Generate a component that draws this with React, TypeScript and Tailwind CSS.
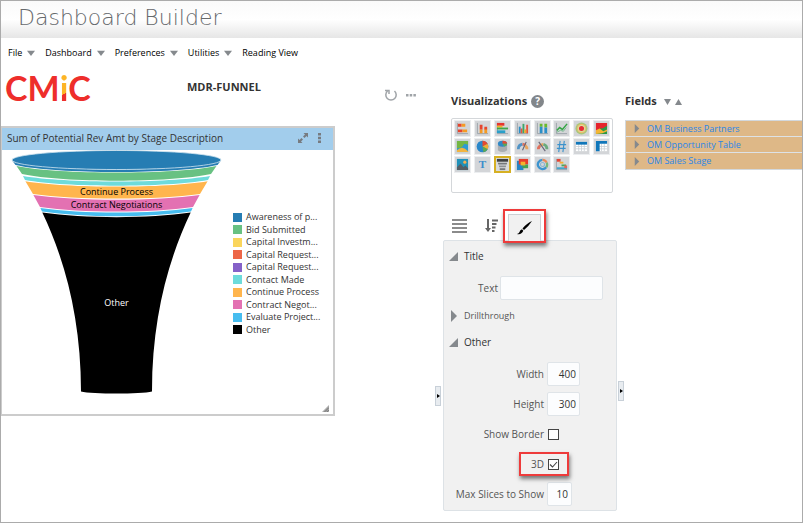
import { useState } from "react";
import type { ReactNode } from "react";

const menus = [
  { label: "File", hasMenu: true },
  { label: "Dashboard", hasMenu: true },
  { label: "Preferences", hasMenu: true },
  { label: "Utilities", hasMenu: true },
  { label: "Reading View", hasMenu: false },
];

const legend = [
  { label: "Awareness of p...", swatch: "bg-[#267db3]" },
  { label: "Bid Submitted", swatch: "bg-[#68c182]" },
  { label: "Capital Investm...", swatch: "bg-[#fad55c]" },
  { label: "Capital Request...", swatch: "bg-[#ed6647]" },
  { label: "Capital Request...", swatch: "bg-[#8561c8]" },
  { label: "Contact Made", swatch: "bg-[#6ddbdb]" },
  { label: "Continue Process", swatch: "bg-[#ffb54d]" },
  { label: "Contract Negot...", swatch: "bg-[#e371b2]" },
  { label: "Evaluate Project...", swatch: "bg-[#47bdef]" },
  { label: "Other", swatch: "bg-black" },
];

const fields = ["OM Business Partners", "OM Opportunity Table", "OM Sales Stage"];

// Each slice: left edge x/y and centre depth of its upper and lower rim
const slices = [
  { fill: "#267db3", top: [11.5, 12, 20.5], bottom: [14.5, 16, 23] },
  { fill: "#68c182", top: [15.5, 17, 23.6], bottom: [21, 25, 31.7] },
  { fill: "#6ddbdb", top: [22, 27, 32.5], bottom: [24, 31, 36.7] },
  { fill: "#ffb54d", top: [24.4, 32.2, 37.6], bottom: [32, 45, 49.6] },
  { fill: "#e371b2", top: [32.4, 46, 50.7], bottom: [39, 58, 62.6] },
  { fill: "#47bdef", top: [39.4, 59, 63.6], bottom: [41, 62.6, 67.3] },
];

const CENTER = 115.5;

function slicePath(top: number[], bottom: number[]) {
  const [tx, ty, tc] = top;
  const [bx, by, bc] = bottom;
  const tr = CENTER * 2 - tx;
  const br = CENTER * 2 - bx;
  const td = ty + (tc - ty) / 0.75;
  const bd = by + (bc - by) / 0.75;
  return `M${tx} ${ty}C${tx + 42} ${td} ${tr - 42} ${td} ${tr} ${ty}L${br} ${by}C${br - 42} ${bd} ${bx + 42} ${bd} ${bx} ${by}Z`;
}

function FunnelChart() {
  return (
    <svg width="228" height="252" viewBox="1 1 228 252" className="shrink-0" role="img" aria-label="Funnel chart">
      {slices.map((s) => (
        <path key={s.fill} d={slicePath(s.top, s.bottom)} fill={s.fill} />
      ))}
      <ellipse cx={CENTER} cy="11" rx="104.5" ry="9.5" fill="#267db3" stroke="#cfe3ef" strokeWidth="0.8" />
      <path
        d="M41.3 63.6C84 69.7 147 69.7 189.7 63.6C167 111 151 170 151 242.5C140 245.3 91 245.3 80 242.5C80 170 64 111 41.3 63.6Z"
        fill="#000"
      />
      <g textAnchor="middle" className="text-[9px]">
        <text x={CENTER} y="46">Continue Process</text>
        <text x={CENTER} y="59">Contract Negotiations</text>
        <text x={CENTER} y="157" fill="#fff">Other</text>
      </g>
    </svg>
  );
}

function Caret({ dir = "down", className = "" }: { dir?: "down" | "up" | "right" | "corner"; className?: string }) {
  const shapes = {
    down: "M0 1H8L4 8Z",
    up: "M0 8H8L4 1Z",
    right: "M1 0L7 4L1 8Z",
    corner: "M8 0V8H0Z",
  };
  return (
    <svg viewBox="0 0 8 8" preserveAspectRatio="none" fill="#85898d" className={`shrink-0 ${className}`} aria-hidden="true">
      <path d={shapes[dir]} />
    </svg>
  );
}

const axis = <path d="M2.5 2V13.5H14" fill="none" stroke="#9aa3aa" />;

const visualizations: { name: string; icon: ReactNode }[] = [
  {
    name: "Horizontal stacked bar",
    icon: (
      <>
        {axis}
        <path d="M3 3h4v3H3zM3 9h5v3H3z" fill="#e6452e" />
        <path d="M7 3h4v3H7zM8 9h5v3H8z" fill="#f59a23" />
      </>
    ),
  },
  {
    name: "Stacked bar",
    icon: (
      <>
        {axis}
        <path d="M5 9h3v4H5zM10 8h3v5h-3z" fill="#f59a23" />
        <path d="M5 4h3v5H5zM10 6h3v3h-3z" fill="#e6452e" />
      </>
    ),
  },
  {
    name: "Horizontal bar",
    icon: (
      <>
        {axis}
        <path d="M2 2h8v3H2z" fill="#e6352e" />
        <path d="M2 5h6v2H2z" fill="#f5b323" />
        <path d="M2 7h12v2H2z" fill="#3fa648" />
        <path d="M2 10h9v3H2z" fill="#2a9fc9" />
      </>
    ),
  },
  {
    name: "Bar",
    icon: (
      <>
        {axis}
        <path d="M4 6h2v7H4z" fill="#2a8fc9" />
        <path d="M6 8h2v5H6zM12 4h2v9h-2z" fill="#e6553e" />
        <path d="M8 3h2v10H8z" fill="#3fa668" />
        <path d="M10 9h2v4h-2z" fill="#f5a623" />
      </>
    ),
  },
  {
    name: "Combination",
    icon: (
      <>
        {axis}
        <path d="M5 3h3v3H5zM10 3h3v4h-3z" fill="#68b92f" />
        <path d="M5 6h3v7H5zM10 7h3v6h-3z" fill="#2a8fc9" />
      </>
    ),
  },
  {
    name: "Line",
    icon: (
      <>
        {axis}
        <path d="M3 10L6 7L9 9L14 3" fill="none" stroke="#36a546" strokeWidth="1.6" />
        <path d="M3 12L7 10L10 11L13 7" fill="none" stroke="#71b98c" />
      </>
    ),
  },
  {
    name: "Sunburst",
    icon: (
      <>
        <circle cx="8" cy="8" r="6.5" fill="#a9c77c" />
        <circle cx="8" cy="8" r="4.8" fill="#f4bd69" />
        <circle cx="8" cy="8" r="3.8" fill="#d9dfa2" />
        <circle cx="8" cy="8" r="2.7" fill="#e52b36" />
      </>
    ),
  },
  {
    name: "Area",
    icon: (
      <>
        <path d="M2 2H14V7L8 10L2 13Z" fill="#e5232c" />
        <path d="M14 5V14H2V12Q6 7 9 8Z" fill="#299846" />
        <path d="M2 10L6 8L10 11L14 9V11L9 13L2 14Z" fill="#f4b634" />
      </>
    ),
  },
  {
    name: "Map area",
    icon: (
      <>
        <path d="M2 2H14V14H2Z" fill="#2d9bd1" />
        <path d="M2 2H14V6L10 5L7 9L2 10Z" fill="#74b643" />
        <path d="M2 14V12Q8 6 14 13V14Z" fill="#f2b440" />
      </>
    ),
  },
  {
    name: "Pie",
    icon: (
      <>
        <circle cx="8" cy="8" r="6.3" fill="#2987ca" />
        <path d="M8 8V1.7A6.3 6.3 0 0 1 13.5 5Z" fill="#e54a30" />
        <path d="M8 8L13.5 5A6.3 6.3 0 0 1 13.5 11Z" fill="#f3ad32" />
        <path d="M8 8L13.5 11A6.3 6.3 0 0 1 9 14.2Z" fill="#5ca952" />
      </>
    ),
  },
  {
    name: "3D pie",
    icon: (
      <>
        <path d="M3 6H13V12Q8 16 3 12Z" fill="#a9adb1" />
        <ellipse cx="8" cy="5" rx="5" ry="3.3" fill="#3088c6" />
        <path d="M8 5V1.7A5 3.3 0 0 1 13 5Z" fill="#e54a30" />
        <path d="M8 5H13A5 3.3 0 0 1 10 8Z" fill="#5ca952" />
      </>
    ),
  },
  {
    name: "Dial gauge",
    icon: (
      <>
        <path d="M3.5 11A5.5 5.5 0 0 1 8 5.5" fill="none" stroke="#4f93c6" strokeWidth="3" />
        <path d="M8 5.500A5.500 5.500 0 0 1 11 7" fill="none" stroke="#e0705c" strokeWidth="3" />
        <path d="M11 7A5.500 5.500 0 0 1 12.800 11" fill="none" stroke="#e9a55c" strokeWidth="3" />
        <path d="M8 12L12 3" stroke="#667" strokeWidth="1.2" />
      </>
    ),
  },
  {
    name: "Status gauge",
    icon: (
      <>
        <path d="M3.500 11A5.500 5.500 0 0 1 5.500 7" fill="none" stroke="#e0705c" strokeWidth="3" />
        <path d="M5.500 7A5.500 5.500 0 0 1 9 5.600" fill="none" stroke="#e9a55c" strokeWidth="3" />
        <path d="M9 5.600A5.500 5.500 0 0 1 12.800 11" fill="none" stroke="#6aab7d" strokeWidth="3" />
        <path d="M11 13L4 3" stroke="#667" strokeWidth="1.2" />
      </>
    ),
  },
  {
    name: "Number",
    icon: <path d="M6.5 2L5 14M11 2L9.5 14M3.5 6H13M3 10H12.5" stroke="#3c92cc" strokeWidth="1.2" />,
  },
  {
    name: "Table",
    icon: (
      <>
        <path d="M2 3H14V13H2Z" fill="#fff" />
        <path d="M2 8H14M2 10.5H14M5 5V13M8 5V13M11 5V13" stroke="#c4ccd2" strokeWidth="0.8" />
        <path d="M2 3H14V6H2Z" fill="#0f76ba" />
      </>
    ),
  },
  {
    name: "Pivot table",
    icon: (
      <>
        <path d="M2 2H14V13H2Z" fill="#fff" />
        <path d="M5 8H14M5 10.5H14M8 5V13M11 5V13" stroke="#c4ccd2" strokeWidth="0.8" />
        <path d="M2 2H14V5H6V13H2Z" fill="#0f76ba" />
      </>
    ),
  },
  {
    name: "Image",
    icon: (
      <>
        <path d="M2 2H14V14H2Z" fill="#1f91b9" />
        <circle cx="10.5" cy="5.5" r="1.7" fill="#f3ae52" />
        <path d="M2 14V11L6 7L9 11L11 9L14 12V14Z" fill="#555f66" />
      </>
    ),
  },
  {
    name: "Text",
    icon: (
      <text x="8" y="12" textAnchor="middle" fontSize="12" fill="#3c8dcb" className="font-['Liberation_Serif',serif] font-bold">
        T
      </text>
    ),
  },
  {
    name: "Funnel",
    icon: (
      <>
        <path d="M2 2H14V5H2Z" fill="#3f4142" />
        <path d="M3 6H13L12.5 8H3.5Z" fill="#74787a" />
        <path d="M4 9H12L11.5 11H4.5Z" fill="#8d9193" />
        <path d="M5 12H11V14H5Z" fill="#74787a" />
      </>
    ),
  },
  {
    name: "Treemap",
    icon: (
      <>
        <path d="M2 4H9V14H2Z" fill="#2583c4" />
        <path d="M4 2H14V8H4Z" fill="#e63c2d" />
        <path d="M8 8H14V12H8Z" fill="#43a252" />
        <path d="M6 5H11V9H6Z" fill="#f4b12d" />
      </>
    ),
  },
  {
    name: "Ring",
    icon: (
      <g fill="none" strokeWidth="2.5">
        <path d="M8 3A5 5 0 1 0 12 11" stroke="#3c94cf" />
        <path d="M8 3A5 5 0 0 1 12.5 6" stroke="#e98b5a" />
        <path d="M12.5 6A5 5 0 0 1 12 11" stroke="#76b77b" />
        <circle cx="8" cy="8" r="2.2" stroke="#8ab6d3" strokeWidth="1.2" />
      </g>
    ),
  },
  {
    name: "Gantt",
    icon: (
      <>
        {axis}
        <path d="M3 2H7V5H3Z" fill="#e54535" />
        <path d="M6 5H10V7H6Z" fill="#f3ae32" />
        <path d="M8 8H13V10H8Z" fill="#49a659" />
        <path d="M3 11H14V13H3Z" fill="#41a5cb" />
        <path d="M11 9H14V12H11Z" fill="#e5655a" />
      </>
    ),
  },
];

function SettingRow({ label, htmlFor, children }: { label: string; htmlFor: string; children: ReactNode }) {
  return (
    <div className="grid h-[30px] grid-cols-[100px_1fr] items-center gap-[3px]">
      <label htmlFor={htmlFor} className="whitespace-nowrap text-right">
        {label}
      </label>
      <div className="flex items-center">{children}</div>
    </div>
  );
}

function CheckBox({ id, checked, onChange }: { id: string; checked: boolean; onChange: (v: boolean) => void }) {
  return (
    <span className="ml-px grid h-[11px] w-[11px]">
      <input
        id={id}
        type="checkbox"
        checked={checked}
        onChange={(e) => onChange(e.target.checked)}
        className="col-start-1 row-start-1 h-[11px] w-[11px] appearance-none border border-[#444] bg-white"
      />
      {checked && (
        <svg viewBox="0 0 11 11" className="pointer-events-none col-start-1 row-start-1 h-[11px] w-[11px]" aria-hidden="true">
          <path d="M2 5.5L4.5 8L9 3" fill="none" stroke="#444" strokeWidth="1.1" />
        </svg>
      )}
    </span>
  );
}

function SectionToggle({ label, open }: { label: string; open: boolean }) {
  return (
    <button
      type="button"
      aria-expanded={open}
      className={`flex items-center ${open ? "gap-[6px] text-[#333]" : "gap-[6px] text-[9px]"}`}
    >
      {open ? <Caret dir="corner" className="h-[9px] w-[9px]" /> : <Caret dir="right" className="ml-px h-3 w-[8px]" />}
      {label}
    </button>
  );
}

function Splitter({ className }: { className: string }) {
  return (
    <button
      type="button"
      aria-label="Collapse pane"
      className={`flex h-5 w-[6px] shrink-0 items-center justify-center border border-[#c8d0d8] bg-[#e8ecf0] ${className}`}
    >
      <svg width="3" height="4" viewBox="0 0 3 4" aria-hidden="true">
        <path d="M0 0L3 2L0 4Z" fill="#000" />
      </svg>
    </button>
  );
}

function ChartPanel() {
  return (
    <section className="flex h-[290px] w-[334px] max-w-full flex-col border-2 border-l border-[#ccc] bg-white">
      <header className="flex h-[22px] items-center bg-[#a2cdec] pb-[3px] pl-[5px] pr-3 text-[#333]">
        <h2 className="flex-1 whitespace-nowrap">Sum of Potential Rev Amt by Stage Description</h2>
        <button type="button" aria-label="Maximize">
          <svg width="10" height="10" viewBox="0 0 10 10" fill="#777b80" aria-hidden="true">
            <path d="M5.5 0H10V4.5L8.500 3L6.500 5L5 3.500L7 1.500ZM0 5.500L1.500 7L3.500 5L5 6.500L3 8.500L4.500 10H0Z" />
          </svg>
        </button>
        <button type="button" aria-label="Chart menu" className="ml-[10px]">
          <svg width="3" height="10" viewBox="0 0 3 10" fill="#777b80" aria-hidden="true">
            <path d="M0 0H3V2.500H0ZM0 3.700H3V6.200H0ZM0 7.400H3V9.900H0Z" />
          </svg>
        </button>
      </header>
      <div className="flex min-h-0 flex-1">
        <FunnelChart />
        <ul className="mt-[61px] grid h-[125px] grid-rows-10 pl-[3px] text-[9px] leading-3 text-[#333]">
          {legend.map((item, i) => (
            <li key={i} className="flex items-center gap-1 whitespace-nowrap">
              <span className={`h-[9px] w-[9px] ${item.swatch}`} />
              {item.label}
            </li>
          ))}
        </ul>
      </div>
      <svg width="7" height="7" viewBox="0 0 7 7" className="mb-[2px] mr-1 shrink-0 self-end" aria-hidden="true">
        <path d="M0 7L7 0V7Z" fill="#aaa" />
        <path d="M2.5 7L7 2.5M4.8 7L7 4.8" stroke="#666" strokeWidth="0.8" />
      </svg>
    </section>
  );
}

export default function App() {
  const [selected, setSelected] = useState("Funnel");
  const [showBorder, setShowBorder] = useState(false);
  const [is3d, setIs3d] = useState(true);

  const numberInput = "h-6 rounded-[2px] border border-[#dfe4e8] bg-[#fcfdfe] pr-[3px] text-right text-[#333]";

  return (
    <div className="min-h-screen overflow-hidden border border-[#ababab] bg-white font-['Open_Sans','Noto_Sans',sans-serif] text-[10px] leading-4 text-[#555]">
      <header className="flex h-[37px] items-center bg-linear-to-b from-[#fafafa] via-white to-[#e6e6e6] pb-[3px] pl-[17px]">
        <h1 className="font-['DejaVu_Sans',sans-serif] text-[22px] font-extralight leading-8 text-[#66696c]">Dashboard Builder</h1>
      </header>

      <nav className="flex h-[30px] items-center gap-[10px] pl-[7px] text-[9px] text-black">
        {menus.map((menu) => (
          <button key={menu.label} type="button" className="flex items-center gap-[5px] whitespace-nowrap">
            {menu.label}
            {menu.hasMenu && <Caret className="h-[6px] w-[8px]" />}
          </button>
        ))}
      </nav>

      <main className="flex items-start">
        <div className="min-w-0 flex-1">
          <div className="flex h-[58px] items-start">
            <div className="flex w-[186px] pl-1 pt-[2px] font-['Lato',sans-serif] text-[34px] font-bold leading-9 text-[#ee2e2b]">
              <span>CM</span>
              <span className="bg-linear-[155deg] from-[#fdb526] from-65% to-[#ee2e2b] to-65% bg-clip-text text-transparent">i</span>
              <span>C</span>
            </div>
            <h2 className="pt-[11px] text-[11px] font-bold text-[#333]">MDR-FUNNEL</h2>
            <div className="ml-auto flex items-center gap-2 pr-[19px] pt-5">
              <button type="button" aria-label="Refresh">
                <svg width="14" height="14" viewBox="0 0 14 14" fill="none" stroke="#a0a4a8" strokeWidth="1.5" aria-hidden="true">
                  <path d="M3.5 3A5.2 5.2 0 1 0 10.5 3M1 2.5H5V6" />
                </svg>
              </button>
              <button type="button" aria-label="More">
                <svg width="10" height="3" viewBox="0 0 10 3" fill="#a0a4a8" aria-hidden="true">
                  <path d="M0 0H2.5V2.5H0ZM3.7 0H6.2V2.5H3.7ZM7.4 0H9.9V2.5H7.4Z" />
                </svg>
              </button>
            </div>
          </div>
          <ChartPanel />
        </div>

        <Splitter className="mt-[318px]" />

        <div className="ml-[2px] w-[174px] shrink-0 pt-[25px]">
          <div className="flex items-center gap-1 pl-2">
            <h2 className="text-[11px] font-bold text-[#333]">Visualizations</h2>
            <button type="button" aria-label="Help" className="h-[13px] w-[13px] rounded-full bg-[#82868a] text-center text-[10px] font-bold leading-[13px] text-white">
              ?
            </button>
          </div>
          <div className="ml-2 mt-[9px] grid h-[75px] w-[162px] grid-cols-8 content-start gap-x-[3px] gap-y-px rounded-[2px] border border-[#d4d7da] px-[2px] py-[1px]">
            {visualizations.map((v) => (
              <button
                key={v.name}
                type="button"
                aria-label={v.name}
                aria-pressed={selected === v.name}
                onClick={() => setSelected(v.name)}
                className={`flex h-[17px] w-[17px] items-center justify-center ${
                  selected === v.name ? "border-2 border-[#d6b023] bg-[#d9dbdc]" : "border border-[#eceef0] bg-[#d3d5d8]"
                }`}
              >
                <svg viewBox="1 1 14 14" className="h-[13px] w-[13px] shrink-0" aria-hidden="true">
                  {v.icon}
                </svg>
              </button>
            ))}
          </div>

          <div className="relative z-10 -mb-[3px] mt-4 flex h-[34px] items-center pl-[9px]">
            <button type="button" aria-label="Data">
              <svg width="15" height="14" viewBox="0 0 15 14" stroke="#666" strokeWidth="1.5" aria-hidden="true">
                <path d="M0 1H15M0 5H15M0 9H15M0 13H15" />
              </svg>
            </button>
            <button type="button" aria-label="Sort" className="ml-[18px]">
              <svg width="13" height="14" viewBox="0 0 13 14" aria-hidden="true">
                <path d="M2 0H4V9H6L3 13L0 9H2Z" fill="#666" />
                <path d="M7 1.5H13M7 5H11.5M7 8.5H10.5M7 12H9.5" stroke="#666" strokeWidth="1.8" />
              </svg>
            </button>
            <div className="ml-auto mr-[71px] h-[34px] w-[43px] border-2 border-[#ee3b3b] px-[3px] pt-[3px] shadow-[1px_3px_4px_rgba(0,0,0,0.5)]">
              <button type="button" aria-label="Format" className="flex h-full w-full items-center justify-center border-x border-t border-[#ccd1d5] bg-[#f1f1f1]">
                <svg width="15" height="14" viewBox="0 0 15 14" aria-hidden="true">
                  <path d="M15 0Q10 2 5.5 7.5L7 9Q11.500 5.500 15 0ZM5 8.300Q3 8.800 2.500 11Q2 12.500 0 13Q4.500 14 6.300 9.700Z" />
                </svg>
              </button>
            </div>
          </div>

          <div className="h-[271px] rounded-[2px] border border-[#dde2e6] bg-[#f1f1f1] pl-[5px] pt-[7px]">
            <SectionToggle label="Title" open />
            <div className="mt-1 grid h-10 grid-cols-[49px_103px] items-center gap-[2px]">
              <label htmlFor="title-text" className="text-right">Text</label>
              <input id="title-text" type="text" className="h-6 rounded-[2px] border border-[#dfe4e8] bg-[#fcfdfe] px-1" />
            </div>
            <SectionToggle label="Drillthrough" open={false} />
            <div className="mt-[10px]">
              <SectionToggle label="Other" open />
            </div>
            <div className="mt-[9px] -ml-[5px]">
              <SettingRow label="Width" htmlFor="width">
                <input id="width" type="text" defaultValue="400" className={`w-[33px] ${numberInput}`} />
              </SettingRow>
              <SettingRow label="Height" htmlFor="height">
                <input id="height" type="text" defaultValue="300" className={`w-[33px] ${numberInput}`} />
              </SettingRow>
              <SettingRow label="Show Border" htmlFor="show-border">
                <CheckBox id="show-border" checked={showBorder} onChange={setShowBorder} />
              </SettingRow>
              <div className="relative">
                <SettingRow label="3D" htmlFor="three-d">
                  <CheckBox id="three-d" checked={is3d} onChange={setIs3d} />
                </SettingRow>
                <span className="pointer-events-none absolute left-[75px] top-[3px] h-6 w-[50px] border-2 border-[#ee3b3b] shadow-[1px_3px_4px_rgba(0,0,0,0.5)]" />
              </div>
              <SettingRow label="Max Slices to Show" htmlFor="max-slices">
                <input id="max-slices" type="text" defaultValue="10" className={`w-[25px] ${numberInput}`} />
              </SettingRow>
            </div>
          </div>
        </div>

        <Splitter className="ml-px mt-[313px]" />

        <aside className="ml-px w-[177px] shrink-0 pt-[25px]">
          <div className="flex items-center">
            <h2 className="text-[11px] font-bold text-[#333]">Fields</h2>
            <button type="button" aria-label="Expand all" className="ml-[7px]">
              <Caret className="h-[7px] w-[7px]" />
            </button>
            <button type="button" aria-label="Collapse all" className="ml-1">
              <Caret dir="up" className="h-[7px] w-[7px]" />
            </button>
          </div>
          <ul className="mt-[11px] border border-r-0 border-[#d3d8dc] text-[9px]">
            {fields.map((field) => (
              <li key={field} className="flex h-4 items-center gap-[7px] border-b border-[#dde2e6] bg-[#deb887] pl-2 last:border-b-0">
                <Caret dir="right" className="h-[9px] w-[6px]" />
                <a href="#" className="text-[#2a86e8]">{field}</a>
              </li>
            ))}
          </ul>
        </aside>
      </main>
    </div>
  );
}
